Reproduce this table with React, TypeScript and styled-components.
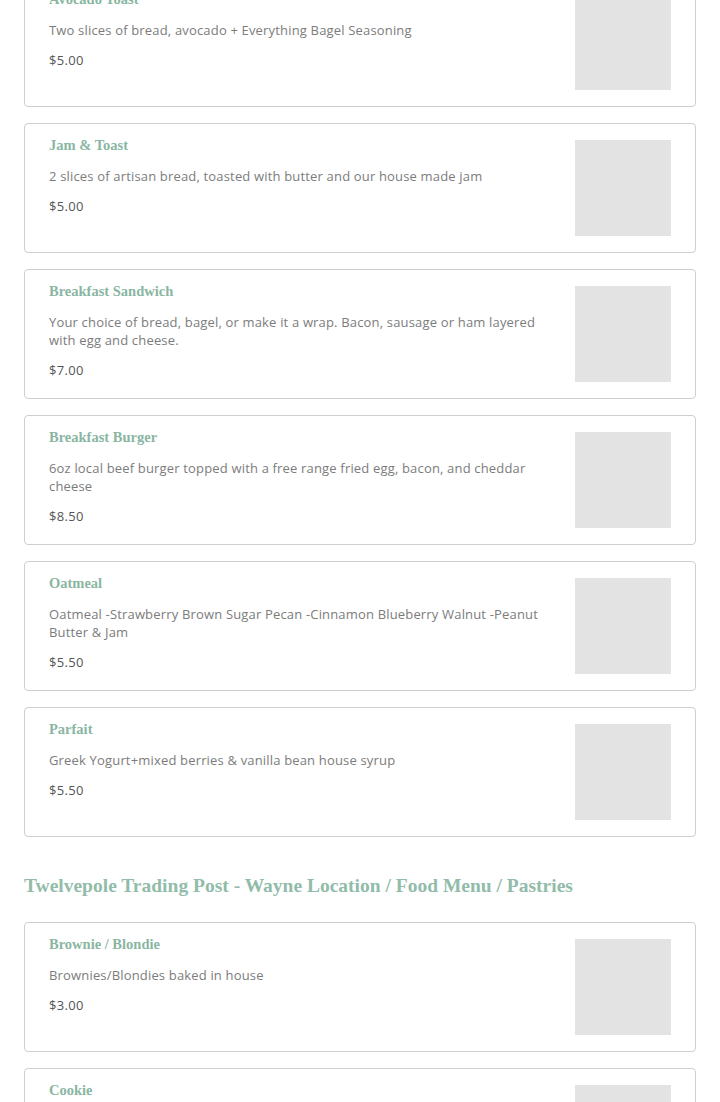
import React from 'react';
import styled, { createGlobalStyle } from 'styled-components';

interface Item {
  name: string;
  description: string;
  price: string;
}

interface Section {
  title?: string;
  items: Item[];
}

const GlobalStyle = createGlobalStyle`
  html, body {
    margin: 0;
    padding: 0;
    background: #ffffff;
  }
  body {
    font-family: "Open Sans", "Liberation Sans", sans-serif;
  }
`;

const Page = styled.main`
  padding: 0 24px;
  margin-top: -23px;
  display: flex;
  flex-direction: column;
`;

const SectionBlock = styled.section`
  display: flex;
  flex-direction: column;
  gap: 16px;
`;

const SectionTitle = styled.h2`
  margin: 35px 0 22px;
  font-family: "Liberation Serif", "DejaVu Serif", serif;
  font-weight: 700;
  font-size: 19.5px;
  line-height: 28px;
  color: #92bcaa;
`;

const Card = styled.article`
  display: flex;
  justify-content: space-between;
  align-items: flex-start;
  gap: 24px;
  border: 1px solid #cfcfcf;
  border-radius: 4px;
  padding: 16px 24px;
  min-height: 96px;
`;

const Info = styled.div`
  display: flex;
  flex-direction: column;
  flex: 1;
  margin-top: -2px;
`;

const Name = styled.h3`
  margin: 0;
  font-family: "Liberation Serif", "DejaVu Serif", serif;
  font-weight: 700;
  font-size: 14.5px;
  line-height: 14px;
  color: #89b6a2;
`;

const Description = styled.p`
  margin: 15px 0 0;
  font-size: 13px;
  line-height: 18px;
  letter-spacing: 0.17px;
  color: #7c7c7c;
`;

const Price = styled.div`
  margin-top: 12px;
  font-size: 13px;
  line-height: 18px;
  letter-spacing: 0.3px;
  color: #555555;
`;

const Thumb = styled.div`
  width: 96px;
  height: 96px;
  flex-shrink: 0;
  background: #e3e3e3;
`;

const sections: Section[] = [
  {
    items: [
      {
        name: 'Avocado Toast',
        description: 'Two slices of bread, avocado + Everything Bagel Seasoning',
        price: '$5.00',
      },
      {
        name: 'Jam & Toast',
        description: '2 slices of artisan bread, toasted with butter and our house made jam',
        price: '$5.00',
      },
      {
        name: 'Breakfast Sandwich',
        description:
          'Your choice of bread, bagel, or make it a wrap. Bacon, sausage or ham layered with egg and cheese.',
        price: '$7.00',
      },
      {
        name: 'Breakfast Burger',
        description: '6oz local beef burger topped with a free range fried egg, bacon, and cheddar cheese',
        price: '$8.50',
      },
      {
        name: 'Oatmeal',
        description:
          'Oatmeal -Strawberry Brown Sugar Pecan -Cinnamon Blueberry Walnut -Peanut Butter & Jam',
        price: '$5.50',
      },
      {
        name: 'Parfait',
        description: 'Greek Yogurt+mixed berries & vanilla bean house syrup',
        price: '$5.50',
      },
    ],
  },
  {
    title: 'Twelvepole Trading Post - Wayne Location / Food Menu / Pastries',
    items: [
      {
        name: 'Brownie / Blondie',
        description: 'Brownies/Blondies baked in house',
        price: '$3.00',
      },
      {
        name: 'Cookie',
        description: 'Cookies baked in house',
        price: '$2.00',
      },
    ],
  },
];

const MenuCard = ({ item }: { item: Item }) => (
  <Card>
    <Info>
      <Name>{item.name}</Name>
      <Description>{item.description}</Description>
      <Price>{item.price}</Price>
    </Info>
    <Thumb />
  </Card>
);

const App = () => (
  <>
    <GlobalStyle />
    <Page>
      {sections.map((section, i) => (
        <React.Fragment key={i}>
          {section.title ? <SectionTitle>{section.title}</SectionTitle> : null}
          <SectionBlock>
            {section.items.map((item) => (
              <MenuCard key={item.name} item={item} />
            ))}
          </SectionBlock>
        </React.Fragment>
      ))}
    </Page>
  </>
);

export default App;
